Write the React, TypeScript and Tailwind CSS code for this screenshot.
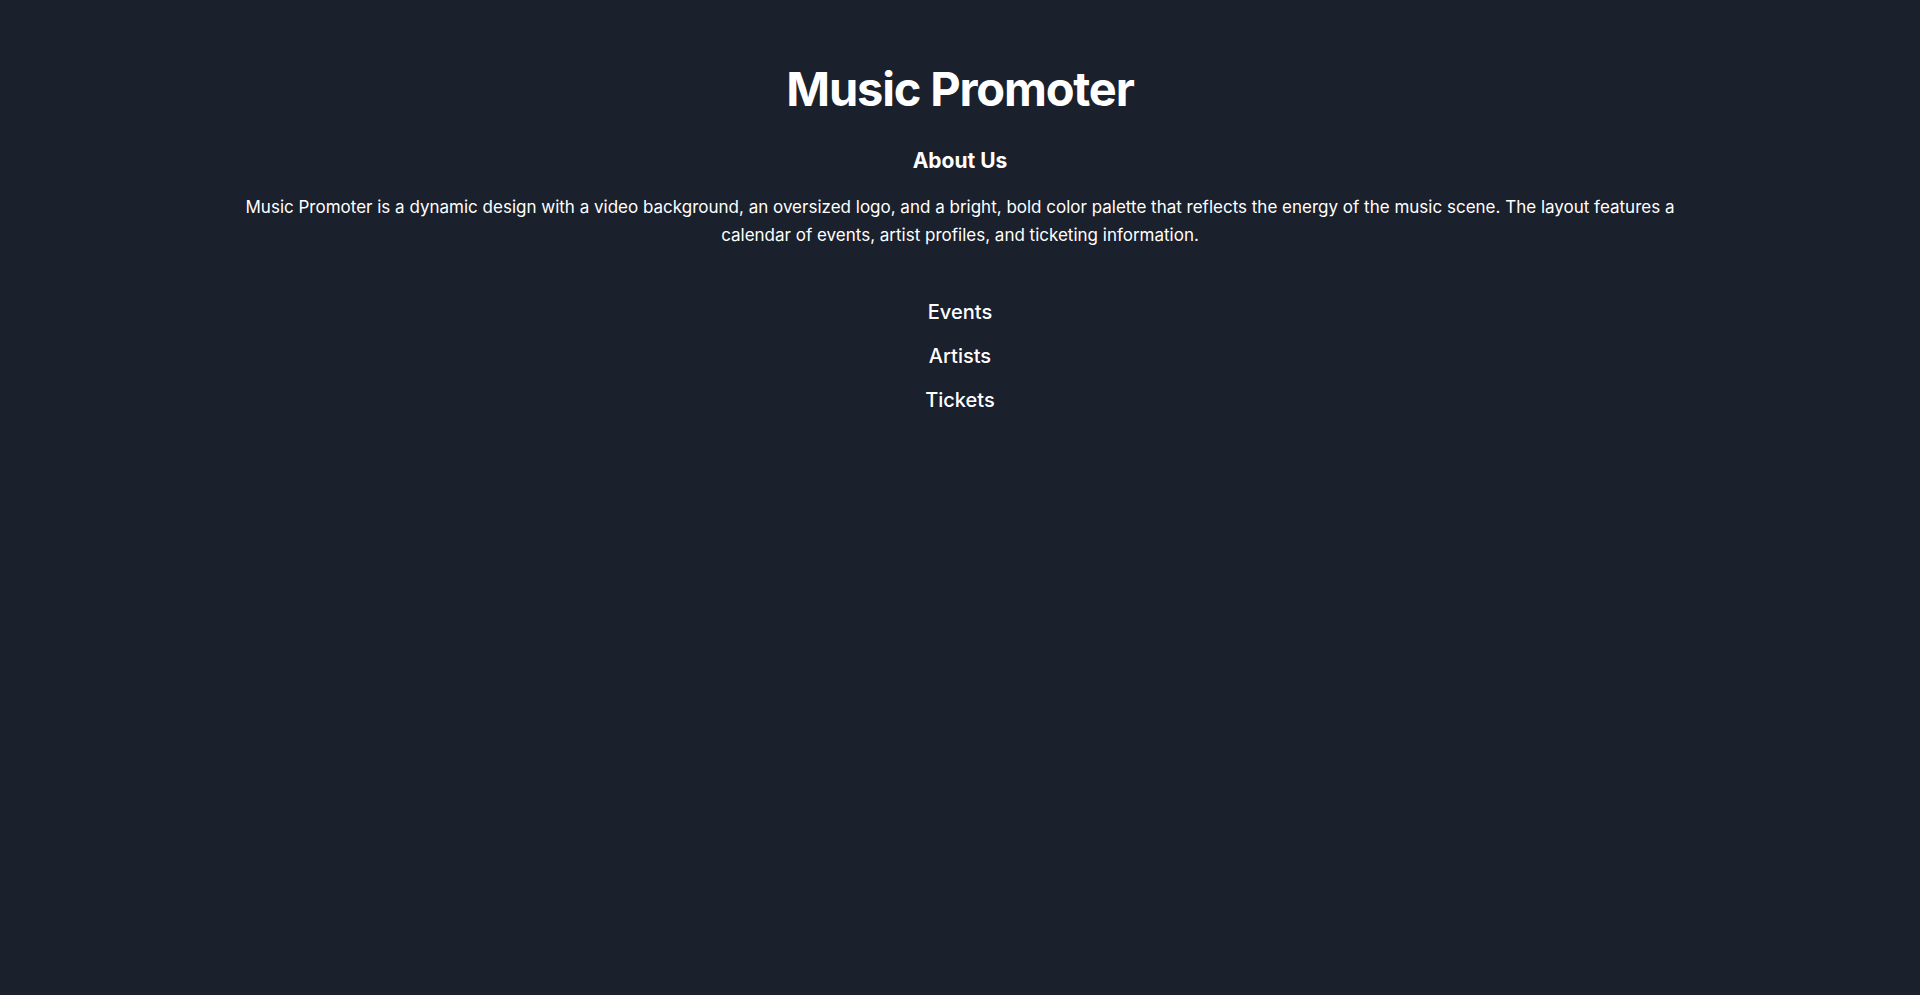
import React from "react";

export default function App() {
  return (
    <div
      className="min-h-screen bg-[#1a202c] text-white"
      style={{ fontFamily: "Inter, 'Noto Sans', sans-serif" }}
    >
      <div className="container mx-auto px-4 pt-[65px] pb-16 text-center">
        <h1 className="mb-[35px] text-[47px] font-bold leading-none tracking-[-0.025em]">Music Promoter</h1>
        <section className="mb-[49px]">
          <h2 className="mb-[18px] text-[21px] font-bold leading-7">About Us</h2>
          <p className="mx-auto max-w-[1450px] text-[17px] leading-7">
            Music Promoter is a dynamic design with a video background, an oversized logo, and a bright, bold color palette that reflects the energy of the music scene. The layout features a calendar of events, artist profiles, and ticketing information.
          </p>
        </section>
        <nav className="flex flex-col items-center gap-4">
          <a href="#" className="text-xl font-medium leading-7">Events</a>
          <a href="#" className="text-xl font-medium leading-7">Artists</a>
          <a href="#" className="text-xl font-medium leading-7">Tickets</a>
        </nav>
      </div>
    </div>
  );
}
